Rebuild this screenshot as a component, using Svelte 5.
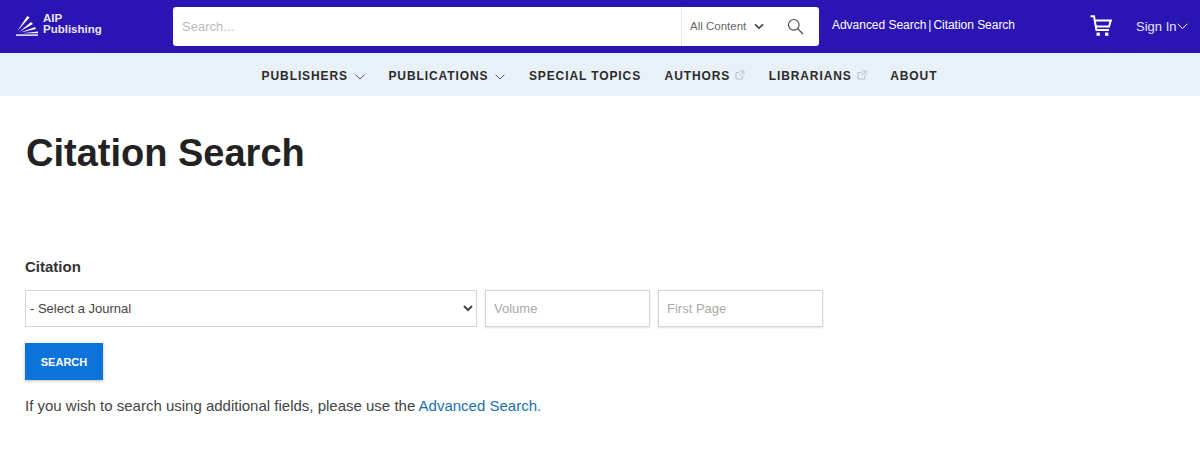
<script>
  const navItems = [
    { label: 'PUBLISHERS', icon: 'chev' },
    { label: 'PUBLICATIONS', icon: 'chev' },
    { label: 'SPECIAL TOPICS' },
    { label: 'AUTHORS', icon: 'ext' },
    { label: 'LIBRARIANS', icon: 'ext' },
    { label: 'ABOUT' }
  ];
</script>

<header class="top">
  <a class="logo" href="#top">
    <svg width="24" height="20" viewBox="0 0 24 20" fill="#fff" aria-hidden="true">
      <path d="M1 15.5 11.2 0 13.6 1.6Z" />
      <path d="M3 16 15 6 17 8Z" />
      <path d="M4.5 16.5 19 11 20 13Z" />
      <path d="M6 17.2 22 15.6V17.2Z" />
      <path d="M0 18.4H22V19.8H0Z" />
    </svg>
    <span class="logo-text">AIP<br />Publishing</span>
  </a>

  <div class="search">
    <input class="search-input" placeholder="Search..." />
    <div class="scope">
      <span>All Content</span>
      <svg width="10" height="7" viewBox="0 0 10 7" aria-hidden="true"><path d="M1 1.2 5 5.2 9 1.2" fill="none" stroke="#333" stroke-width="1.6" /></svg>
    </div>
    <div class="glass">
      <svg width="17" height="17" viewBox="0 0 17 17" aria-hidden="true"><circle cx="6.8" cy="6.8" r="5.3" fill="none" stroke="#444" stroke-width="1.1" /><path d="M10.7 10.7 16 16" stroke="#444" stroke-width="1.2" /></svg>
    </div>
  </div>

  <div class="links"><a href="#a">Advanced Search</a><span class="bar">|</span><a href="#c">Citation Search</a></div>

  <div class="account">
    <svg class="cart" width="22" height="21" viewBox="0 0 22 21" aria-hidden="true">
      <path d="M0.5 1.2H4L6.4 15H19" fill="none" stroke="#fff" stroke-width="2" />
      <path d="M4.6 5.5H20.8L19 11.6H5.8" fill="none" stroke="#fff" stroke-width="2" />
      <rect x="6.5" y="17.6" width="3.4" height="3.2" fill="#fff" />
      <rect x="15" y="17.6" width="3.4" height="3.2" fill="#fff" />
    </svg>
    <span class="signin">Sign In</span>
    <svg width="11" height="7" viewBox="0 0 11 7" aria-hidden="true"><path d="M.7.8 5.5 5.6 10.3.8" fill="none" stroke="#fff" stroke-width="1" /></svg>
  </div>
</header>

<nav class="nav">
  {#each navItems as item}
    <a class="nav-item" href="#n">
      {item.label}
      {#if item.icon === 'chev'}
        <svg class="chev" width="10" height="6" viewBox="0 0 10 6" aria-hidden="true"><path d="M.6.7 5 5.1 9.4.7" fill="none" stroke="#555" stroke-width="1" /></svg>
      {:else if item.icon === 'ext'}
        <svg class="ext" width="10" height="10" viewBox="0 0 10 10" aria-hidden="true"><path d="M7.5 5.5V9H1V2.5H4.5M5 1H9V5M9 1 4.5 5.5" fill="none" stroke="#b9bdc4" stroke-width="1" /></svg>
      {/if}
    </a>
  {/each}
</nav>

<main class="main">
  <h1>Citation Search</h1>
  <form class="form" onsubmit={(e) => e.preventDefault()}>
    <label class="label" for="journal">Citation</label>
    <div class="fields">
      <select id="journal" class="journal">
        <option>- Select a Journal</option>
      </select>
      <input class="field" placeholder="Volume" />
      <input class="field" placeholder="First Page" />
    </div>
    <button class="submit" type="submit">SEARCH</button>
    <p class="note">If you wish to search using additional fields, please use the <a href="#adv">Advanced Search.</a></p>
  </form>
</main>

<style>
  :global(body) {
    margin: 0;
    background: #fff;
    font-family: "Liberation Sans", Arial, sans-serif;
    color: #222;
  }
  a { text-decoration: none; color: inherit; }

  .top {
    height: 53px;
    box-sizing: border-box;
    background: #2a14b4;
    display: flex;
    align-items: center;
    padding: 0 0 0 16px;
  }
  .logo {
    width: 157px;
    display: flex;
    align-items: center;
    gap: 3px;
    color: #fff;
    flex: none;
    margin-top: -2px;
  }
  .logo-text {
    font-size: 11.5px;
    line-height: 11px;
    font-weight: 700;
    color: #e8e6f8;
    margin-top: -3px;
  }
  .search {
    width: 646px;
    height: 39px;
    background: #fff;
    border-radius: 3px;
    display: flex;
    align-items: center;
    flex: none;
    margin-top: -1px;
  }
  .search-input {
    flex: 1;
    min-width: 0;
    height: 100%;
    box-sizing: border-box;
    border: 0;
    border-right: 1px solid #e8e8e8;
    background: transparent;
    padding: 0 9px;
    font: 13px "Liberation Sans", Arial, sans-serif;
    outline: none;
  }
  .search-input::placeholder { color: #bbb; opacity: 1; }
  .scope {
    width: 88px;
    box-sizing: border-box;
    padding-left: 8px;
    display: flex;
    align-items: center;
    gap: 8px;
    font-size: 11.5px;
    color: #666;
  }
  .glass {
    width: 49px;
    box-sizing: border-box;
    padding-left: 17px;
    display: flex;
    align-items: center;
  }
  .links {
    margin-left: 13px;
    margin-top: -3px;
    width: 258px;
    flex: none;
    color: #fff;
    font-size: 12px;
    letter-spacing: -0.03px;
    font-weight: 400;
  }
  .bar { margin: 0 2px; }
  .account {
    display: flex;
    align-items: center;
    color: #e8e6f8;
    font-size: 13px;
  }
  .cart { margin-right: 24px; margin-top: -2px; }
  .signin { margin-right: 1px; }

  .nav {
    height: 43px;
    box-sizing: border-box;
    padding: 2px 1px 0 0;
    background: #e8f0f8;
    display: flex;
    align-items: center;
    justify-content: center;
    gap: 23.5px;
    font-size: 12px;
    font-weight: 700;
    letter-spacing: 0.9px;
    color: #2b2b2b;
  }
  .nav-item { display: flex; align-items: center; gap: 5px; white-space: nowrap; }
  .chev { margin-top: 2px; margin-left: 2px; }
  .ext { margin-top: -2px; }

  .main { padding: 0 25px; }
  h1 {
    margin: 0 0 0 1px;
    padding-top: 36px;
    font-size: 38px;
    line-height: 42px;
    font-weight: 700;
    color: #222;
  }
  .form { margin-top: 85px; }
  .label {
    display: block;
    font-size: 15px;
    line-height: 16px;
    font-weight: 700;
    color: #333;
  }
  .fields {
    display: flex;
    gap: 8px;
    margin-top: 15px;
  }
  .journal, .field {
    height: 37px;
    box-sizing: border-box;
    border: 1px solid #d4d4d4;
    background: #fff;
    font: 13px "Liberation Sans", Arial, sans-serif;
    border-radius: 0;
    outline: none;
  }
  .journal { width: 452px; color: #444; padding: 0; }
  .field {
    width: 165px;
    padding: 0 8px;
    box-shadow: 0 1px 2px rgba(0,0,0,.12);
  }
  .field::placeholder { color: #aaa; opacity: 1; }
  .submit {
    display: block;
    margin-top: 16px;
    width: 78px;
    height: 37px;
    border: 0;
    background: #0b73d9;
    color: #fff;
    font: 700 11px "Liberation Sans", Arial, sans-serif;
    box-shadow: 0 1px 3px rgba(0,0,0,.25);
    padding: 0;
  }
  .note {
    margin: 17px 0 0;
    font-size: 15px;
    line-height: 18px;
    color: #444;
  }
  .note a { color: #1a6fb0; }
</style>
